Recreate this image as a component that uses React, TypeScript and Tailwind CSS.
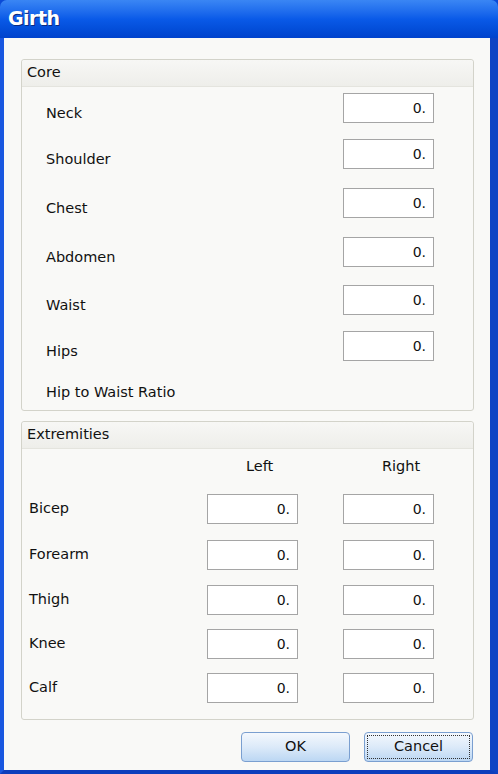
import React from 'react';

const coreRows = [
  { name: 'Neck', mt: 'mt-[6px]' },
  { name: 'Shoulder', mt: 'mt-[16px]' },
  { name: 'Chest', mt: 'mt-[19px]' },
  { name: 'Abdomen', mt: 'mt-[19px]' },
  { name: 'Waist', mt: 'mt-[18px]' },
  { name: 'Hips', mt: 'mt-[16px]' },
];

const extRows = [
  { name: 'Bicep', mt: 'mt-[15px]' },
  { name: 'Forearm', mt: 'mt-[16px]' },
  { name: 'Thigh', mt: 'mt-[15px]' },
  { name: 'Knee', mt: 'mt-[14px]' },
  { name: 'Calf', mt: 'mt-[14px]' },
];

const NumBox = () => (
  <div className="w-[91px] h-[30px] border border-[#a5a5a5] bg-white flex items-center justify-end pr-[7px] text-[14px] text-[#111]">
    0.
  </div>
);

const GroupHeader = ({ title }: { title: string }) => (
  <div className="h-[27px] flex items-center pl-[5px] border-b border-[#e4e4de] bg-gradient-to-b from-[#f7f7f5] to-[#eeeeea] rounded-t-[3px] text-[14.5px] text-[#111]">
    {title}
  </div>
);

const Button = ({ label, focused }: { label: string; focused?: boolean }) => (
  <button className="w-[109px] h-[30px] rounded-[4px] border border-[#7a9fd0] bg-gradient-to-b from-[#f4f8fd] via-[#dceaf9] to-[#bcd7f3] p-[2px] text-[14.5px] text-[#111]">
    <div className={`w-full h-full flex items-center justify-center ${focused ? 'border border-dotted border-[#333]' : ''}`}>
      {label}
    </div>
  </button>
);

export default function App() {
  return (
    <div className="w-[498px] h-[774px] flex flex-col font-['DejaVu_Sans',sans-serif] bg-[#0a4ad6]">
      {/* Title bar */}
      <div className="h-[38px] rounded-t-[7px] bg-gradient-to-b from-[#3a86f4] via-[#0a5ae8] to-[#0043cc] flex items-center pl-[8px] pb-[2px]">
        <span className="text-white font-bold text-[19px] tracking-[-0.5px] [text-shadow:1px_1px_0_#0a2a80]">Girth</span>
      </div>

      {/* Body */}
      <div className="flex-1 flex flex-col border-l-[4px] border-r-[8px] border-b-[4px] border-l-[#1957e0] border-r-[#0d43c4] border-b-[#0c3ebc] bg-[#f9f9f7] pl-[17px] pr-[16px] pt-[21px]">
        {/* Core group */}
        <div className="h-[352px] border border-[#d3d3ca] rounded-[3px] flex flex-col">
          <GroupHeader title="Core" />
          {coreRows.map((r) => (
            <div key={r.name} className={`${r.mt} h-[30px] flex items-center`}>
              <span className="w-[321px] pl-[24px] pt-[11px] text-[14.5px] text-[#111]">{r.name}</span>
              <NumBox />
            </div>
          ))}
          <div className="mt-[17px] h-[30px] flex items-center pl-[24px] text-[14.5px] text-[#111]">
            Hip to Waist Ratio
          </div>
        </div>

        {/* Extremities group */}
        <div className="mt-[10px] h-[299px] border border-[#d3d3ca] rounded-[3px] flex flex-col">
          <GroupHeader title="Extremities" />
          <div className="mt-[6px] h-[24px] flex items-center text-[14.5px] text-[#111]">
            <span className="w-[224px]" />
            <span className="w-[45px]">Left</span>
            <span className="w-[91px]" />
            <span>Right</span>
          </div>
          {extRows.map((r) => (
            <div key={r.name} className={`${r.mt} h-[30px] flex items-center`}>
              <span className="w-[185px] pl-[7px] text-[14.5px] text-[#111]">{r.name}</span>
              <NumBox />
              <span className="w-[45px]" />
              <NumBox />
            </div>
          ))}
        </div>

        {/* Buttons */}
        <div className="mt-[12px] flex justify-end gap-[14px] pr-[1px]">
          <Button label="OK" />
          <Button label="Cancel" focused />
        </div>
      </div>
    </div>
  );
}
